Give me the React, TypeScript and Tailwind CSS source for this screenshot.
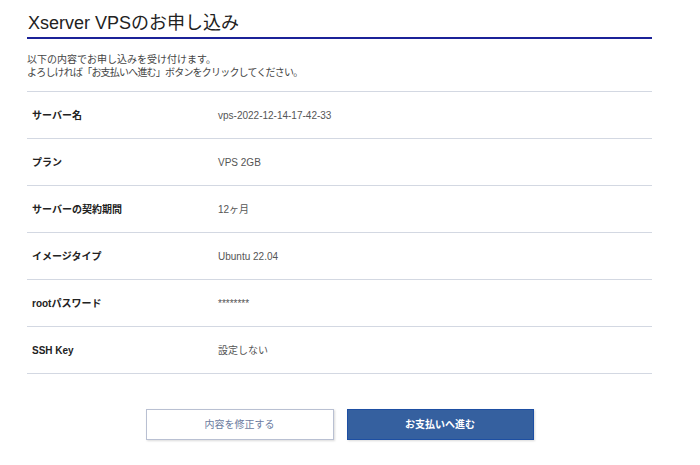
import React from 'react';

const rows = [
  { label: 'サーバー名', value: 'vps-2022-12-14-17-42-33' },
  { label: 'プラン', value: 'VPS 2GB' },
  { label: 'サーバーの契約期間', value: '12ヶ月' },
  { label: 'イメージタイプ', value: 'Ubuntu 22.04' },
  { label: 'rootパスワード', value: '********' },
  { label: 'SSH Key', value: '設定しない' },
];

const App = () => {
  return (
    <div
      className="w-[700px] h-[465px] bg-white text-[#333]"
      style={{ fontFamily: '"Liberation Sans", "Noto Sans CJK JP", sans-serif' }}
    >
      <div className="ml-[27px] w-[625px] pt-[11px]">
        {/* Title */}
        <h1 className="text-[18px] leading-[24px] text-[#222] pl-px">Xserver VPSのお申し込み</h1>
        <div className="mt-[2px] h-[2px] bg-[#1b2298]"></div>

        <div className="mt-[14px] text-[10px] leading-[13px] text-[#444]">
          <p>以下の内容でお申し込みを受け付けます。</p>
          <p className="tracking-[-0.8px]">よろしければ「お支払いへ進む」ボタンをクリックしてください。</p>
        </div>

        {/* Confirmation table */}
        <div className="mt-[12px] border-t border-[#d3d8e2]">
          {rows.map((row) => (
            <div key={row.label} className="flex items-center h-[47px] border-b border-[#d3d8e2] text-[10px]">
              <div className="w-[191px] pl-[5px] font-bold text-[#222]">{row.label}</div>
              <div className="text-[#555]">{row.value}</div>
            </div>
          ))}
        </div>

        {/* Actions */}
        <div className="flex justify-center gap-[13px] mt-[35px]">
          <button className="w-[188px] h-[31px] bg-white border border-[#b9c0d2] shadow-[1px_1px_2px_rgba(0,0,0,0.15)] text-[10px] text-[#6b7ba0]">
            内容を修正する
          </button>
          <button className="w-[187px] h-[31px] bg-[#35609f] border border-[#1d4fa3] shadow-[1px_1px_2px_rgba(0,0,0,0.15)] text-[10px] font-bold text-white">
            お支払いへ進む
          </button>
        </div>
      </div>
    </div>
  );
};

export default App;
